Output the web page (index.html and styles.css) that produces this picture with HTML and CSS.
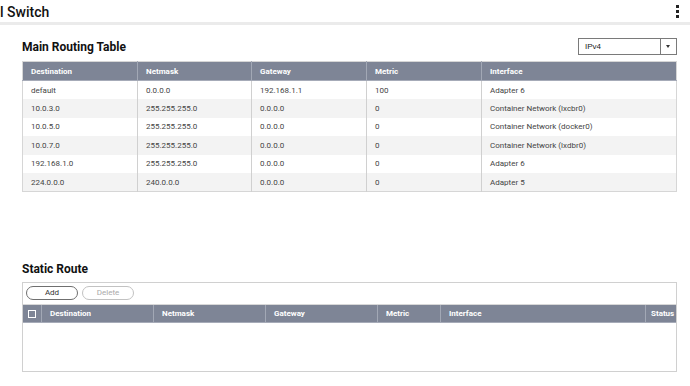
FILE: index.html
```html
<!DOCTYPE html>
<html>
<head>
<meta charset="UTF-8">
<meta name="viewport" content="width=device-width, initial-scale=1.0">
<title>Virtual Switch</title>
<link rel="stylesheet" href="styles.css">
</head>
<body>
<div class="topbar">
  <div class="app-title">l Switch</div>
  <div class="kebab"><span></span><span></span><span></span></div>
</div>

<div class="content">
  <div class="section-head">
    <div class="section-title">Main Routing Table</div>
    <div class="select">
      <div class="select-value">IPv4</div>
      <div class="select-arrow"></div>
    </div>
  </div>

  <table class="grid routes">
    <thead>
      <tr>
        <th class="c-dest">Destination</th>
        <th class="c-mask">Netmask</th>
        <th class="c-gw">Gateway</th>
        <th class="c-metric">Metric</th>
        <th>Interface</th>
      </tr>
    </thead>
    <tbody>
      <tr><td>default</td><td>0.0.0.0</td><td>192.168.1.1</td><td>100</td><td>Adapter 6</td></tr>
      <tr><td>10.0.3.0</td><td>255.255.255.0</td><td>0.0.0.0</td><td>0</td><td>Container Network (lxcbr0)</td></tr>
      <tr><td>10.0.5.0</td><td>255.255.255.0</td><td>0.0.0.0</td><td>0</td><td>Container Network (docker0)</td></tr>
      <tr><td>10.0.7.0</td><td>255.255.255.0</td><td>0.0.0.0</td><td>0</td><td>Container Network (lxdbr0)</td></tr>
      <tr><td>192.168.1.0</td><td>255.255.255.0</td><td>0.0.0.0</td><td>0</td><td>Adapter 6</td></tr>
      <tr><td>224.0.0.0</td><td>240.0.0.0</td><td>0.0.0.0</td><td>0</td><td>Adapter 5</td></tr>
    </tbody>
  </table>

  <div class="section-title static-title">Static Route</div>
  <div class="static-box">
    <div class="toolbar">
      <div class="pill">Add</div>
      <div class="pill disabled">Delete</div>
    </div>
    <table class="grid static">
      <thead>
        <tr>
          <th class="s-check"><span class="checkbox"></span></th>
          <th class="s-dest">Destination</th>
          <th class="s-mask">Netmask</th>
          <th class="s-gw">Gateway</th>
          <th class="s-metric">Metric</th>
          <th class="s-if">Interface</th>
          <th class="s-status">Status</th>
        </tr>
      </thead>
    </table>
    <div class="empty"></div>
  </div>
</div>
</body>
</html>
```

FILE: styles.css
```css
body {
  margin: 0;
  padding: 0;
  font-family: Roboto, "Liberation Sans", sans-serif;
  background: #fff;
  color: #444;
}

.topbar {
  height: 22px;
  border-bottom: 3px solid #ebebeb;
  display: flex;
  justify-content: space-between;
  align-items: center;
}

.app-title {
  font-size: 14px;
  font-weight: 500;
  color: #111;
  line-height: 22px;
  margin-top: 1px;
}

.kebab {
  width: 3px;
  margin-right: 11px;
  display: flex;
  flex-direction: column;
  gap: 2px;
  margin-top: 1px;
}

.kebab span {
  width: 3px;
  height: 3px;
  background: #222;
}

.content {
  padding: 0 13px 0 22px;
}

.section-head {
  display: flex;
  justify-content: space-between;
  align-items: center;
  padding-top: 13px;
}

.section-title {
  font-size: 12px;
  font-weight: 700;
  color: #111;
}

.select {
  width: 97px;
  height: 15px;
  border: 1px solid #7a7a7a;
  display: flex;
  font-family: "Liberation Sans", Arial, sans-serif;
  font-size: 8px;
  color: #222;
}

.select-value {
  flex: 1;
  padding-left: 6px;
  line-height: 15px;
}

.select-arrow {
  width: 15px;
  border-left: 1px solid #7a7a7a;
  position: relative;
}

.select-arrow::after {
  content: "";
  position: absolute;
  left: 5px;
  top: 6px;
  border-left: 2.5px solid transparent;
  border-right: 2.5px solid transparent;
  border-top: 3px solid #333;
}

.grid {
  width: 100%;
  border-collapse: collapse;
  table-layout: fixed;
  font-size: 8px;
}

.routes {
  margin-top: 6px;
  border: 1px solid #d6d6d6;
}

.grid th {
  background: #7e8596;
  color: #fff;
  font-weight: 700;
  text-align: left;
  height: 18px;
  padding: 0 0 0 8px;
  border-left: 1px solid #a2a8b5;
  border-bottom: 1px solid #a6abb8;
}

.grid th:first-child {
  border-left: none;
}

.grid td {
  height: 18.4px;
  padding: 0 0 0 8px;
  border-left: 1px solid #d0d0d0;
  color: #444;
}

.grid td:first-child {
  border-left: none;
}

.routes tbody tr:nth-child(even) td {
  background: #f3f3f3;
}

.routes .c-dest { width: 106px; }
.routes .c-mask { width: 105px; }
.routes .c-gw { width: 106px; }
.routes .c-metric { width: 106px; }

.static-title {
  margin-top: 70px;
}

.static-box {
  margin-top: 6px;
  border: 1px solid #d0d0d0;
  height: 88px;
}

.toolbar {
  display: flex;
  gap: 4px;
  padding: 3px 0 0 3px;
  height: 18px;
  border-bottom: 1px solid #d8d8d8;
}

.pill {
  width: 50px;
  height: 12px;
  border: 1px solid #6f6f6f;
  border-radius: 7px;
  font-size: 8px;
  line-height: 12px;
  text-align: center;
  color: #333;
}

.pill.disabled {
  border-color: #c2c2c2;
  color: #aaa;
}

.static th {
  height: 17px;
}

.static .s-check {
  width: 18px;
  padding: 0;
  text-align: center;
}

.static .s-dest { width: 103px; }
.static .s-mask { width: 103px; }
.static .s-gw { width: 103px; }
.static .s-metric { width: 54px; }
.static .s-if { width: 196px; }
.static .s-status { padding-left: 5px; }

.checkbox {
  display: inline-block;
  width: 6px;
  height: 6px;
  border: 1px solid #fff;
  vertical-align: middle;
}

.empty {
  height: 48px;
}
```
